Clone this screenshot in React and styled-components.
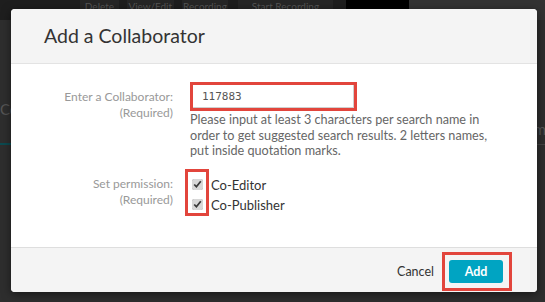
import React from 'react'
import styled, { createGlobalStyle } from 'styled-components'

const GlobalStyle = createGlobalStyle`
  html, body { margin: 0; padding: 0; }
  body {
    width: 545px;
    height: 302px;
    overflow: hidden;
    background: #2c2c2c;
    font-family: Lato, "Open Sans", Arial, sans-serif;
  }
`

const Page = styled.div`
  position: relative;
  width: 545px;
  height: 302px;
  overflow: hidden;
  background: #2e2e2e;
`

const Toolbar = styled.div`
  display: flex;
  height: 20px;
  background: #1e1e1e;
`

const ToolButton = styled.div`
  width: ${p => p.w}px;
  margin-left: ${p => p.ml || 0}px;
  background: ${p => p.bg || '#262626'};
  color: #555;
  font-size: 10px;
  text-align: center;
  line-height: 12px;
  white-space: nowrap;
`

const BackSheet = styled.div`
  display: flex;
  justify-content: space-between;
  padding-top: 80px;
  color: #555;
  font-size: 15px;
`

const BackTab = styled.div`
  width: 30px;
  border-bottom: 2px solid #0c4a50;
  padding-bottom: 6px;
`

const BackRight = styled.div`
  width: 30px;
  margin-top: 20px;
  border-bottom: 1px solid #444;
  padding-bottom: 6px;
  text-align: right;
`

const Modal = styled.div`
  position: absolute;
  left: 11px;
  top: 9px;
  width: 526px;
  background: #fff;
  border-radius: 4px;
  box-shadow: 0 2px 10px rgba(0, 0, 0, 0.5);
  overflow: hidden;
`

const Header = styled.div`
  height: 55px;
  box-sizing: border-box;
  background: #f4f4f4;
  border-bottom: 1px solid #e3e3e3;
  padding: 15px 0 0 33px;
`

const Title = styled.h2`
  margin: 0;
  font-size: 19.5px;
  font-weight: 400;
  color: #333;
  line-height: 24px;
`

const Body = styled.div`
  height: 183px;
  box-sizing: border-box;
  padding-top: 18px;
  display: grid;
  grid-template-columns: 162px 1fr;
  column-gap: 17px;
  row-gap: 10px;
  align-content: start;
`

const Label = styled.div`
  margin-top: ${p => p.mt}px;
  text-align: right;
  font-size: 12px;
  line-height: 16px;
  color: #999;
`

const InputBox = styled.div`
  width: 167px;
  height: 29px;
  box-sizing: border-box;
  border: 3px solid #e2453c;
  display: flex;
`

const Input = styled.input`
  flex: 1;
  min-width: 0;
  box-sizing: border-box;
  border: 1px solid #cfcfcf;
  border-left: none;
  border-top: none;
  outline: none;
  padding: 0 0 0 9px;
  font-family: "DejaVu Sans Mono", "Liberation Mono", monospace;
  font-size: 11px;
  color: #555;
  background: #fff;
`

const Help = styled.p`
  margin: 1px 0 0;
  width: 306px;
  font-size: 12.65px;
  line-height: 15.5px;
  color: #666;
`

const Permissions = styled.div`
  display: flex;
`

const CheckCol = styled.div`
  display: flex;
  flex-direction: column;
  gap: 3px;
  margin-left: -5px;
  padding: 5px 3px 0;
  border: 3px solid #e2453c;
  box-sizing: border-box;
  height: 47px;
`

const CheckCell = styled.div`
  height: 17px;
  display: flex;
  align-items: center;
`

const Check = styled.input`
  width: 11px;
  height: 11px;
  margin: 0 0 0 1px;
  accent-color: #d8d8d8;
  filter: grayscale(1);
`

const OptionCol = styled.div`
  display: flex;
  flex-direction: column;
  gap: 3px;
  padding-top: 8px;
  margin-left: 2px;
`

const Option = styled.div`
  height: 17px;
  font-size: 13px;
  line-height: 17px;
  color: #333;
`

const Footer = styled.div`
  height: 45px;
  box-sizing: border-box;
  background: #f4f4f4;
  border-top: 1px solid #dedede;
  display: flex;
  align-items: center;
  justify-content: flex-end;
  padding: 2px 25px 0 0;
`

const Cancel = styled.button`
  border: none;
  background: none;
  padding: 0;
  margin-right: 8px;
  font-family: inherit;
  font-size: 12.5px;
  color: #333;
`

const Highlight = styled.div`
  border: 3px solid #e2453c;
  padding: 5px 6px 5px 4px;
  display: flex;
`

const AddButton = styled.button`
  width: 54px;
  height: 23px;
  border: none;
  border-radius: 3px;
  background: #00a4c2;
  color: #fff;
  font-family: inherit;
  font-weight: 700;
  font-size: 12.5px;
  padding: 0;
`

export default function App() {
  return (
    <Page>
      <GlobalStyle />
      <Toolbar>
        <ToolButton w={40} ml={80}>Delete</ToolButton>
        <ToolButton w={48} ml={8}>View/Edit</ToolButton>
        <ToolButton w={48} ml={8}>Recording</ToolButton>
        <ToolButton w={97} ml={10}>Start Recording</ToolButton>
        <ToolButton w={65} ml={13} bg="#000" />
        <ToolButton w={140} bg="#333" />
      </Toolbar>
      <BackSheet>
        <BackTab>Coll</BackTab>
        <BackRight>Name</BackRight>
      </BackSheet>

      <Modal>
        <Header>
          <Title>Add a Collaborator</Title>
        </Header>
        <Body>
          <Label mt={7}>Enter a Collaborator:<br />(Required)</Label>
          <div>
            <InputBox>
              <Input defaultValue="117883" />
            </InputBox>
            <Help>
              Please input at least 3 characters per search name in order to get suggested search results. 2 letters names, put inside quotation marks.
            </Help>
          </div>
          <Label mt={7}>Set permission:<br />(Required)</Label>
          <Permissions>
            <CheckCol>
              <CheckCell><Check type="checkbox" defaultChecked /></CheckCell>
              <CheckCell><Check type="checkbox" defaultChecked /></CheckCell>
            </CheckCol>
            <OptionCol>
              <Option>Co-Editor</Option>
              <Option>Co-Publisher</Option>
            </OptionCol>
          </Permissions>
        </Body>
        <Footer>
          <Cancel>Cancel</Cancel>
          <Highlight>
            <AddButton>Add</AddButton>
          </Highlight>
        </Footer>
      </Modal>
    </Page>
  )
}
